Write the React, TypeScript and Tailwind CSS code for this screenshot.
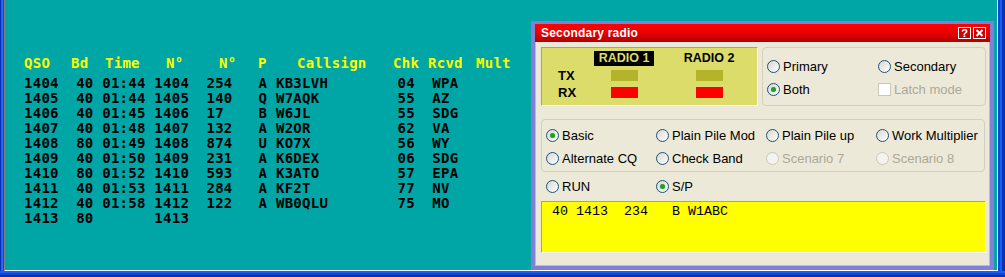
import React from "react";

type Row = { q: string; bd: string; t: string; n: string; p: string; c: string; k: string; r: string };

const data: Row[] = [
  { q: "1404", bd: "40", t: "01:44", n: "254", p: "A", c: "KB3LVH", k: "04", r: "WPA" },
  { q: "1405", bd: "40", t: "01:44", n: "140", p: "Q", c: "W7AQK", k: "55", r: "AZ" },
  { q: "1406", bd: "40", t: "01:45", n: "17", p: "B", c: "W6JL", k: "55", r: "SDG" },
  { q: "1407", bd: "40", t: "01:48", n: "132", p: "A", c: "W2OR", k: "62", r: "VA" },
  { q: "1408", bd: "80", t: "01:49", n: "874", p: "U", c: "KO7X", k: "56", r: "WY" },
  { q: "1409", bd: "40", t: "01:50", n: "231", p: "A", c: "K6DEX", k: "06", r: "SDG" },
  { q: "1410", bd: "80", t: "01:52", n: "593", p: "A", c: "K3ATO", k: "57", r: "EPA" },
  { q: "1411", bd: "40", t: "01:53", n: "284", p: "A", c: "KF2T", k: "77", r: "NV" },
  { q: "1412", bd: "40", t: "01:58", n: "122", p: "A", c: "WB0QLU", k: "75", r: "MO" },
];

function line(r: Row) {
  return `${r.q}  ${r.bd} ${r.t} ${r.q}  ${r.n.padEnd(6)}${r.p} ${r.c.padEnd(14)}${r.k}  ${r.r}`;
}

const headers: [string, string][] = [
  ["QSO", "w-[47px]"],
  ["Bd", "w-[34px]"],
  ["Time", "w-[61px]"],
  ["N°", "w-[53px]"],
  ["N°", "w-[39px]"],
  ["P", "w-[39px]"],
  ["Callsign", "w-[96px]"],
  ["Chk", "w-[35px]"],
  ["Rcvd", "w-[48px]"],
  ["Mult", "w-[45px]"],
];

function Log() {
  return (
    <div className="w-[526px] shrink-0 pl-[19px] pt-[56px] font-['DejaVu_Sans_Mono',monospace] font-bold text-[14px] leading-[15px] tracking-[0.26px]">
      <div className="flex text-[#ffff00] whitespace-pre">
        {headers.map(([h, w], i) => (
          <span key={i} className={`${w} shrink-0`}>
            {h}
          </span>
        ))}
      </div>
      <div className="mt-[5px] text-black whitespace-pre">
        {data.map((r) => (
          <div key={r.q}>{line(r)}</div>
        ))}
        <div>{"1413  80       1413"}</div>
      </div>
    </div>
  );
}

function Radio({
  label,
  checked = false,
  disabled = false,
  className = "",
}: {
  label: string;
  checked?: boolean;
  disabled?: boolean;
  className?: string;
}) {
  return (
    <div className={`flex items-center h-[13px] ${className}`}>
      <span
        className={
          disabled
            ? "w-[13px] h-[13px] shrink-0 rounded-full border border-[#cac8bb] bg-[#f4f3ee]"
            : "w-[13px] h-[13px] shrink-0 rounded-full border border-[#1c5180] bg-linear-to-br from-[#d8d7d0] to-white flex items-center justify-center"
        }
      >
        {checked && <span className="w-[5px] h-[5px] rounded-full bg-[#21a121] shadow-[0_0_1px_#7be07b]" />}
      </span>
      <span
        className={`ml-[3px] whitespace-nowrap text-[13px] leading-[15px] font-['Liberation_Sans',Arial,sans-serif] ${
          disabled ? "text-[#aca899]" : "text-black"
        }`}
      >
        {label}
      </span>
    </div>
  );
}

function TitleBtn({ children }: { children: React.ReactNode }) {
  return (
    <span className="w-[13px] h-[12px] border border-white bg-[#d00000] flex items-center justify-center text-white">
      {children}
    </span>
  );
}

function Dialog() {
  return (
    <div className="mt-[21px] w-[463px] h-[249px] shrink-0 flex flex-col border-[4px] border-t-[3px] border-[#8080d8] bg-[#ece9d8] shadow-[inset_0_0_0_1px_#b8b8f0]">
      <div className="h-[18px] shrink-0 flex items-center bg-linear-to-b from-[#ff0000] via-[#e80000] to-[#b00000] pl-[6px] pr-[4px]">
        <span className="text-white font-bold text-[12px] leading-[14px] tracking-[0.2px] font-['Liberation_Sans',Arial,sans-serif]">
          Secondary radio
        </span>
        <div className="ml-auto flex gap-[2px]">
          <TitleBtn>
            <span className="font-bold text-[11px] leading-[10px] font-['Liberation_Sans',Arial,sans-serif]">?</span>
          </TitleBtn>
          <TitleBtn>
            <svg width="9" height="8" viewBox="0 0 9 8">
              <path d="M1.5 1 L7.5 7 M7.5 1 L1.5 7" stroke="white" strokeWidth="2" />
            </svg>
          </TitleBtn>
        </div>
      </div>
      <div className="flex-1 pl-[6px] pt-[5px] font-['Liberation_Sans',Arial,sans-serif]">
        <div className="flex gap-[4px]">
          <div className="w-[217px] h-[59px] bg-[#dcdc6a] border border-t-[#a0a09a] border-l-[#a0a09a] border-b-white border-r-white pt-[3px]">
            <div className="grid grid-cols-[52px_60px_25px_60px] font-bold">
              <div />
              <div className="h-[15px] bg-black text-[#dcdc6a] text-[12.5px] leading-[15px] text-center">RADIO 1</div>
              <div />
              <div className="h-[15px] text-black text-[12.5px] leading-[15px] text-center">RADIO 2</div>

              <div className="mt-[4px] h-[11px] pl-[16px] text-[13px] leading-[11px]">TX</div>
              <div className="mt-[4px] h-[11px] flex justify-center">
                <span className="w-[27px] h-[11px] bg-[#b4b42a]" />
              </div>
              <div />
              <div className="mt-[4px] h-[11px] flex justify-center">
                <span className="w-[27px] h-[11px] bg-[#b4b42a]" />
              </div>

              <div className="mt-[6px] h-[11px] pl-[16px] text-[13px] leading-[11px]">RX</div>
              <div className="mt-[6px] h-[11px] flex justify-center">
                <span className="w-[27px] h-[11px] bg-[#ff0000]" />
              </div>
              <div />
              <div className="mt-[6px] h-[11px] flex justify-center">
                <span className="w-[27px] h-[11px] bg-[#ff0000]" />
              </div>
            </div>
          </div>
          <div className="w-[224px] h-[59px] border border-[#d0d0bf] rounded-[4px] pl-[4px] pt-[12px]">
            <div className="grid grid-cols-[111px_auto] gap-y-[10px]">
              <Radio label="Primary" />
              <Radio label="Secondary" />
              <Radio label="Both" checked />
              <div className="flex items-center h-[13px]">
                <span className="w-[13px] h-[13px] border border-[#cac8bb] bg-white" />
                <span className="ml-[3px] text-[13px] leading-[15px] text-[#aca899]">Latch mode</span>
              </div>
            </div>
          </div>
        </div>

        <div className="mt-[13px] w-[444px] h-[53px] border border-[#d0d0bf] rounded-[4px] pl-[4px] pt-[9px]">
          <div className="grid grid-cols-[110px_110px_110px_auto] gap-y-[10px]">
            <Radio label="Basic" checked />
            <Radio label="Plain Pile Mod" />
            <Radio label="Plain Pile up" />
            <Radio label="Work Multiplier" />
            <Radio label="Alternate CQ" />
            <Radio label="Check Band" />
            <Radio label="Scenario 7" disabled />
            <Radio label="Scenario 8" disabled />
          </div>
        </div>

        <div className="mt-[8px] pl-[5px] flex">
          <Radio label="RUN" className="w-[110px]" />
          <Radio label="S/P" checked />
        </div>

        <div className="mt-[8px] w-[445px] h-[52px] bg-[#ffff00] border border-t-[#a0a0a0] border-l-[#a0a0a0] border-b-white border-r-white pl-[10px] pt-[2px] font-['Liberation_Mono',monospace] text-[13.33px] leading-[15px] text-black whitespace-pre">
          {"40 1413  234   B W1ABC"}
        </div>
      </div>
    </div>
  );
}

export default function App() {
  return (
    <div className="w-[1005px] h-[277px] flex flex-col bg-[#0a3fd6] overflow-hidden">
      <div className="flex h-[271px]">
        <div className="w-[4px] flex shrink-0">
          <div className="w-[1px] bg-[#0a2fb0]" />
          <div className="w-[1px] bg-[#1a5ef0]" />
          <div className="w-[1px] bg-[#2b6cf8]" />
          <div className="w-[1px] bg-[#0c45d8]" />
        </div>
        <div className="w-[994px] shrink-0 flex bg-[#00a6a6] border-l border-l-[#808080] border-r border-r-white border-b border-b-white">
          <Log />
          <Dialog />
        </div>
        <div className="w-[7px] flex shrink-0">
          <div className="w-[2px] bg-[#0c45d8]" />
          <div className="w-[2px] bg-[#1a5ef0]" />
          <div className="w-[3px] bg-[#0a2fb0]" />
        </div>
      </div>
      <div className="h-[6px] flex flex-col">
        <div className="h-[2px] bg-[#1a5ef0]" />
        <div className="h-[2px] bg-[#0c45d8]" />
        <div className="h-[2px] bg-[#0a2fb0]" />
      </div>
    </div>
  );
}
